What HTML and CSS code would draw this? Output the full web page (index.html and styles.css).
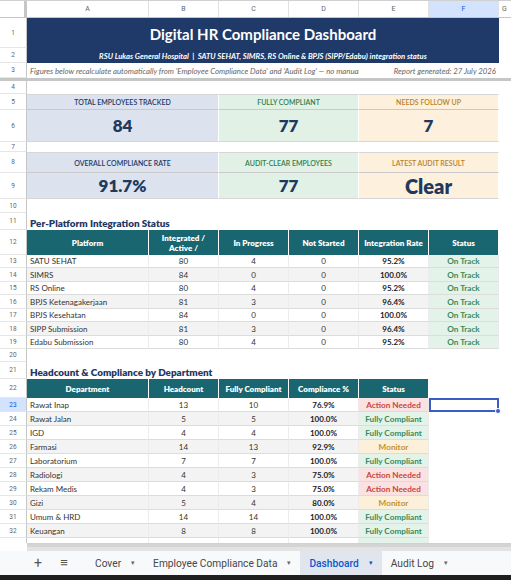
FILE: index.html
```html
<!DOCTYPE html>
<html lang="en">
<head>
<meta charset="UTF-8" />
<title>Digital HR Compliance Dashboard</title>
<link rel="stylesheet" href="styles.css">
</head>
<body>
<div class="app">

  <!-- SHEET GRID -->
  <div class="sheet">
    <div class="row colhead">
      <div class="corner"></div>
      <div class="ch">A</div>
      <div class="ch">B</div>
      <div class="ch">C</div>
      <div class="ch">D</div>
      <div class="ch">E</div>
      <div class="ch active">F</div>
      <div class="ch last">G</div>
    </div>

    <div class="row h30">
      <div class="rh">1</div>
      <div class="c span6 banner title">Digital HR Compliance Dashboard</div>
      <div class="c"></div>
    </div>
    <div class="row h15">
      <div class="rh">2</div>
      <div class="c span6 banner subtitle">RSU Lukas General Hospital &nbsp;|&nbsp; SATU SEHAT, SIMRS, RS Online &amp; BPJS (SIPP/Edabu) integration status</div>
      <div class="c"></div>
    </div>
    <div class="row h15">
      <div class="rh">3</div>
      <div class="c span4 note">Figures below recalculate automatically from 'Employee Compliance Data' and 'Audit Log' — no manual entry needed.</div>
      <div class="c span2 note right">Report generated: 27 July 2026</div>
      <div class="c"></div>
    </div>
    <div class="freeze"></div>

    <div class="row h13">
      <div class="rh">4</div>
      <div class="c span6"></div><div class="c"></div>
    </div>

    <!-- KPI row 1 -->
    <div class="row h16">
      <div class="rh">5</div>
      <div class="c span2 kpi blue label">TOTAL EMPLOYEES TRACKED</div>
      <div class="c span2 kpi green label">FULLY COMPLIANT</div>
      <div class="c span2 kpi amber label">NEEDS FOLLOW UP</div>
      <div class="c"></div>
    </div>
    <div class="row h32">
      <div class="rh">6</div>
      <div class="c span2 kpi blue value">84</div>
      <div class="c span2 kpi green value">77</div>
      <div class="c span2 kpi amber value">7</div>
      <div class="c"></div>
    </div>
    <div class="row h10">
      <div class="rh">7</div>
      <div class="c span6"></div><div class="c"></div>
    </div>

    <!-- KPI row 2 -->
    <div class="row h21">
      <div class="rh">8</div>
      <div class="c span2 kpi blue label">OVERALL COMPLIANCE RATE</div>
      <div class="c span2 kpi green label">AUDIT-CLEAR EMPLOYEES</div>
      <div class="c span2 kpi amber label">LATEST AUDIT RESULT</div>
      <div class="c"></div>
    </div>
    <div class="row h26">
      <div class="rh">9</div>
      <div class="c span2 kpi blue value">91.7%</div>
      <div class="c span2 kpi green value">77</div>
      <div class="c span2 kpi amber value big">Clear</div>
      <div class="c"></div>
    </div>
    <div class="row h14">
      <div class="rh">10</div>
      <div class="c span6"></div><div class="c"></div>
    </div>

    <!-- Per-platform table -->
    <div class="row h17">
      <div class="rh">11</div>
      <div class="c span6 section">Per-Platform Integration Status</div>
      <div class="c"></div>
    </div>
    <div class="row h25">
      <div class="rh">12</div>
      <div class="c th">Platform</div>
      <div class="c th">Integrated /<br>Active /</div>
      <div class="c th">In Progress</div>
      <div class="c th">Not Started</div>
      <div class="c th">Integration Rate</div>
      <div class="c th">Status</div>
      <div class="c"></div>
    </div>
    <div class="row h13 td">
      <div class="rh">13</div>
      <div class="c name">SATU SEHAT</div><div class="c">80</div><div class="c">4</div><div class="c">0</div>
      <div class="c pct">95.2%</div><div class="c st ok">On Track</div><div class="c blank"></div>
    </div>
    <div class="row h14 td alt">
      <div class="rh">14</div>
      <div class="c name">SIMRS</div><div class="c">84</div><div class="c">0</div><div class="c">0</div>
      <div class="c pct">100.0%</div><div class="c st ok">On Track</div><div class="c blank"></div>
    </div>
    <div class="row h13 td">
      <div class="rh">15</div>
      <div class="c name">RS Online</div><div class="c">80</div><div class="c">4</div><div class="c">0</div>
      <div class="c pct">95.2%</div><div class="c st ok">On Track</div><div class="c blank"></div>
    </div>
    <div class="row h14 td alt">
      <div class="rh">16</div>
      <div class="c name">BPJS Ketenagakerjaan</div><div class="c">81</div><div class="c">3</div><div class="c">0</div>
      <div class="c pct">96.4%</div><div class="c st ok">On Track</div><div class="c blank"></div>
    </div>
    <div class="row h13 td">
      <div class="rh">17</div>
      <div class="c name">BPJS Kesehatan</div><div class="c">84</div><div class="c">0</div><div class="c">0</div>
      <div class="c pct">100.0%</div><div class="c st ok">On Track</div><div class="c blank"></div>
    </div>
    <div class="row h14 td alt">
      <div class="rh">18</div>
      <div class="c name">SIPP Submission</div><div class="c">81</div><div class="c">3</div><div class="c">0</div>
      <div class="c pct">96.4%</div><div class="c st ok">On Track</div><div class="c blank"></div>
    </div>
    <div class="row h13 td">
      <div class="rh">19</div>
      <div class="c name">Edabu Submission</div><div class="c">80</div><div class="c">4</div><div class="c">0</div>
      <div class="c pct">95.2%</div><div class="c st ok">On Track</div><div class="c blank"></div>
    </div>
    <div class="row h13">
      <div class="rh">20</div>
      <div class="c span6"></div><div class="c"></div>
    </div>

    <!-- Department table -->
    <div class="row h17">
      <div class="rh">21</div>
      <div class="c span6 section">Headcount &amp; Compliance by Department</div>
      <div class="c"></div>
    </div>
    <div class="row h19">
      <div class="rh">22</div>
      <div class="c th">Department</div>
      <div class="c th">Headcount</div>
      <div class="c th">Fully Compliant</div>
      <div class="c th">Compliance %</div>
      <div class="c th">Status</div>
      <div class="c"></div>
      <div class="c"></div>
    </div>
    <div class="row h14 td">
      <div class="rh active">23</div>
      <div class="c name">Rawat Inap</div><div class="c">13</div><div class="c">10</div>
      <div class="c pct">76.9%</div><div class="c st bad">Action Needed</div>
      <div class="c selected"><span class="handle"></span></div><div class="c blank"></div>
    </div>
    <div class="row h14 td alt">
      <div class="rh">24</div>
      <div class="c name">Rawat Jalan</div><div class="c">5</div><div class="c">5</div>
      <div class="c pct">100.0%</div><div class="c st ok">Fully Compliant</div>
      <div class="c blank"></div><div class="c blank"></div>
    </div>
    <div class="row h14 td">
      <div class="rh">25</div>
      <div class="c name">IGD</div><div class="c">4</div><div class="c">4</div>
      <div class="c pct">100.0%</div><div class="c st ok">Fully Compliant</div>
      <div class="c blank"></div><div class="c blank"></div>
    </div>
    <div class="row h14 td alt">
      <div class="rh">26</div>
      <div class="c name">Farmasi</div><div class="c">14</div><div class="c">13</div>
      <div class="c pct">92.9%</div><div class="c st warn">Monitor</div>
      <div class="c blank"></div><div class="c blank"></div>
    </div>
    <div class="row h14 td">
      <div class="rh">27</div>
      <div class="c name">Laboratorium</div><div class="c">7</div><div class="c">7</div>
      <div class="c pct">100.0%</div><div class="c st ok">Fully Compliant</div>
      <div class="c blank"></div><div class="c blank"></div>
    </div>
    <div class="row h14 td alt">
      <div class="rh">28</div>
      <div class="c name">Radiologi</div><div class="c">4</div><div class="c">3</div>
      <div class="c pct">75.0%</div><div class="c st bad">Action Needed</div>
      <div class="c blank"></div><div class="c blank"></div>
    </div>
    <div class="row h14 td">
      <div class="rh">29</div>
      <div class="c name">Rekam Medis</div><div class="c">4</div><div class="c">3</div>
      <div class="c pct">75.0%</div><div class="c st bad">Action Needed</div>
      <div class="c blank"></div><div class="c blank"></div>
    </div>
    <div class="row h14 td alt">
      <div class="rh">30</div>
      <div class="c name">Gizi</div><div class="c">5</div><div class="c">4</div>
      <div class="c pct">80.0%</div><div class="c st warn">Monitor</div>
      <div class="c blank"></div><div class="c blank"></div>
    </div>
    <div class="row h14 td">
      <div class="rh">31</div>
      <div class="c name">Umum &amp; HRD</div><div class="c">14</div><div class="c">14</div>
      <div class="c pct">100.0%</div><div class="c st ok">Fully Compliant</div>
      <div class="c blank"></div><div class="c blank"></div>
    </div>
    <div class="row h14 td alt">
      <div class="rh">32</div>
      <div class="c name">Keuangan</div><div class="c">8</div><div class="c">8</div>
      <div class="c pct">100.0%</div><div class="c st ok">Fully Compliant</div>
      <div class="c blank"></div><div class="c blank"></div>
    </div>
    <div class="row h14 td">
      <div class="rh"></div>
      <div class="c name"></div><div class="c"></div><div class="c"></div>
      <div class="c pct"></div><div class="c st ok"></div>
      <div class="c blank"></div><div class="c blank"></div>
    </div>
  </div>

  <!-- horizontal scrollbar -->
  <div class="hscroll"><div class="thumb"></div></div>

  <!-- sheet tabs -->
  <div class="tabs">
    <span class="tab-btn">+</span>
    <span class="tab-btn menu">&#8801;</span>
    <span class="tab">Cover <i>&#9662;</i></span>
    <span class="tab">Employee Compliance Data <i>&#9662;</i></span>
    <span class="tab current">Dashboard <i>&#9662;</i></span>
    <span class="tab">Audit Log <i>&#9662;</i></span>
  </div>
  <div class="taskbar"></div>
</div>
</body>
</html>
```

FILE: styles.css
```css
/* Base */
* {
  box-sizing: border-box;
}
body {
  margin: 0;
  background: #fff;
  font-family: 'Lato', 'Liberation Sans', sans-serif;
  color: #222;
}

.app {
  width: 511px;
  height: 580px;
  display: flex;
  flex-direction: column;
  overflow: hidden;
}

.sheet {
  flex: 1;
  overflow: hidden;
  border-top: 1px solid #d0d0d0;
}

/* Every sheet row shares the same column template */
.row {
  display: grid;
  grid-template-columns: 27px 122px 70px 70px 70px 70px 70px 12px;
}
.h10 { height: 10px; }
.h13 { height: 13px; }
.h14 { height: 14px; }
.h15 { height: 15px; }
.h16 { height: 16px; }
.h17 { height: 17px; }
.h19 { height: 19px; }
.h21 { height: 21px; }
.h25 { height: 25px; }
.h26 { height: 26px; }
.h30 { height: 30px; }
.h32 { height: 32px; }

.span2 { grid-column: span 2; }
.span4 { grid-column: span 4; }
.span6 { grid-column: span 6; }

/* Column + row headers */
.colhead {
  height: 17px;
  border-bottom: 1px solid #c4c7c5;
}
.corner {
  border-right: 3px solid #c4c7c5;
}
.ch {
  display: flex;
  align-items: center;
  justify-content: center;
  font-family: 'Roboto', 'Liberation Sans', sans-serif;
  font-size: 7px;
  color: #5f6368;
  border-right: 1px solid #e1e1e1;
}
.ch.active {
  background: #d3e3fd;
  color: #0b57d0;
}
.ch.last {
  border-right: none;
  justify-content: flex-start;
  padding-left: 3px;
}
.rh {
  display: flex;
  align-items: center;
  justify-content: center;
  font-family: 'Roboto', 'Liberation Sans', sans-serif;
  font-size: 6.5px;
  color: #5f6368;
  border-right: 1px solid #c4c7c5;
  border-bottom: 1px solid #e6e6e6;
}
.rh.active {
  background: #d3e3fd;
  color: #0b57d0;
}

/* Generic cell */
.c {
  display: flex;
  align-items: center;
  justify-content: center;
  font-size: 8px;
  white-space: nowrap;
  overflow: hidden;
  min-width: 0;
}

.freeze {
  height: 3px;
  background: #c4c7c5;
}

/* Banner rows 1-2 */
.banner {
  background: #1f3a68;
  color: #fff;
}
.title {
  font-size: 15px;
  font-weight: 700;
  padding-top: 2px;
}
.subtitle {
  font-size: 7.7px;
  font-weight: 700;
  font-style: italic;
}
.note {
  justify-content: flex-start;
  padding-left: 3px;
  font-style: italic;
  font-size: 7.8px;
  color: #666;
}
.note.right {
  justify-content: flex-end;
  padding-right: 3px;
}

/* KPI boxes */
.kpi {
  border-right: 1px solid #fff;
}
.kpi.label {
  font-size: 7px;
  font-weight: 600;
  border-bottom: 1px solid #c9c9c9;
  border-top: 1px solid #d6d6d6;
}
.kpi.value {
  font-size: 17px;
  font-weight: 800;
  color: #1f3a5f;
  border-bottom: 1px solid #d6d6d6;
}
.kpi.value.big {
  font-size: 20px;
}
.kpi.blue { background: #dce3ef; }
.kpi.green { background: #e2f1e6; }
.kpi.amber { background: #fdf0dc; }
.kpi.blue.label { color: #1f3864; }
.kpi.green.label { color: #2f7d4e; }
.kpi.amber.label { color: #b7812b; }

/* Section titles */
.section {
  justify-content: flex-start;
  padding-left: 3px;
  padding-top: 2px;
  font-size: 9.9px;
  font-weight: 800;
  color: #1f3864;
}

/* Table header cells */
.th {
  background: #1a6670;
  color: #fff;
  font-weight: 800;
  font-size: 8px;
  text-align: center;
  line-height: 1.25;
  border-right: 1px solid #fff;
}

/* Table body */
.td .c {
  border-bottom: 1px solid #dcdcdc;
  border-right: 1px solid #ececec;
  color: #333;
}
.td.alt .c {
  background: #f3f3f3;
}
.td .c.name {
  justify-content: flex-start;
  padding-left: 3px;
}
.td .c.pct {
  font-weight: 700;
  color: #222;
}
.td .c.blank {
  background: #fff;
  border: none;
}
.td .c.st {
  font-weight: 700;
  font-size: 8.2px;
}
.td .c.ok { background: #e3f3e9; color: #3a8a5c; }
.td .c.bad { background: #fbe2e2; color: #c9453d; }
.td .c.warn { background: #fdf0da; color: #c4902c; }

.td .c.selected {
  position: relative;
  overflow: visible;
  background: #fff;
  border: 2px solid #3b5cc4;
}
.handle {
  position: absolute;
  right: -4px;
  bottom: -4px;
  width: 6px;
  height: 6px;
  border-radius: 50%;
  background: #3b5cc4;
  border: 1px solid #fff;
}

/* Horizontal scrollbar */
.hscroll {
  height: 8px;
  margin-left: 27px;
  background: #e3e3e3;
  border-top: 1px solid #d0d0d0;
  display: flex;
}
.thumb {
  width: 100%;
  height: 3px;
  background: #d4d4d4;
}

/* Sheet tabs */
.tabs {
  height: 24px;
  background: #f8f9fa;
  display: flex;
  align-items: center;
  padding-left: 25px;
  font-family: 'Roboto', 'Liberation Sans', sans-serif;
  font-size: 10.2px;
  color: #444746;
}
.tab-btn {
  font-size: 14px;
  color: #555;
  width: 26px;
  text-align: center;
  line-height: 24px;
}
.tab-btn.menu {
  font-size: 13px;
  margin-right: 9px;
}
.tab {
  height: 24px;
  display: flex;
  align-items: center;
  padding: 0 9px;
  gap: 10px;
}
.tab i {
  font-style: normal;
  font-size: 7px;
  color: #666;
}
.tab.current {
  background: #e1e6ee;
  color: #0b57d0;
  font-weight: 500;
}
.tab.current i {
  color: #0b57d0;
}

.taskbar {
  height: 5px;
  background: #1f1f1f;
}
```
